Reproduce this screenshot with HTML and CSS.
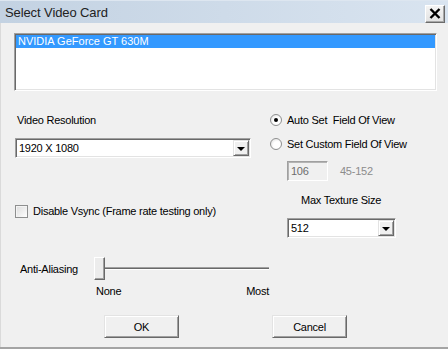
FILE: index.html
```html
<!DOCTYPE html>
<html>
<head>
    <title>Select Video Card</title>
    <link rel="stylesheet" href="styles.css">
</head>
<body>
    <div class="window">
        <div class="titlebar">
            <span class="title">Select Video Card</span>
            <button class="close">
                <svg width="12" height="11" viewBox="0 0 12 11">
                    <path d="M1.5 1 L10.5 10 M10.5 1 L1.5 10" stroke="#000" stroke-width="2.4" fill="none"/>
                </svg>
            </button>
        </div>

        <div class="content">
            <div class="listbox">
                <div class="list-item selected">NVIDIA GeForce GT 630M</div>
            </div>

            <div class="middle">
                <div class="col-left">
                    <div class="label">Video Resolution</div>
                    <div class="combo combo-res">
                        <span class="combo-text">1920 X 1080</span>
                        <span class="drop"><span class="arrow"></span></span>
                    </div>
                    <div class="check-row">
                        <span class="checkbox"></span>
                        <span>Disable Vsync (Frame rate testing only)</span>
                    </div>
                </div>

                <div class="col-right">
                    <div class="radio-row">
                        <span class="radio checked"></span>
                        <span>Auto Set &nbsp;Field Of View</span>
                    </div>
                    <div class="radio-row second">
                        <span class="radio"></span>
                        <span>Set Custom Field Of View</span>
                    </div>
                    <div class="fov-row">
                        <div class="edit disabled">106</div>
                        <span class="range">45-152</span>
                    </div>
                    <div class="label tex-label">Max Texture Size</div>
                    <div class="combo combo-tex">
                        <span class="combo-text">512</span>
                        <span class="drop"><span class="arrow"></span></span>
                    </div>
                </div>
            </div>

            <div class="aa-row">
                <span class="aa-label">Anti-Aliasing</span>
                <div class="slider">
                    <span class="thumb"></span>
                    <span class="track"></span>
                </div>
            </div>
            <div class="slider-labels">
                <span>None</span>
                <span>Most</span>
            </div>

            <div class="buttons">
                <button class="btn">OK</button>
                <button class="btn">Cancel</button>
            </div>
        </div>
    </div>
</body>
</html>
```

FILE: styles.css
```css
body{
    margin: 0;
    padding: 0;
    background-color: #f0f0f0;
    font-family: "Liberation Sans", Arial, sans-serif;
    font-size: 11px;
    letter-spacing: -0.25px;
    color: #000;
}
.window{
    width: 448px;
    height: 349px;
    box-sizing: border-box;
    border-bottom: 2px solid #a4a4a4;
    box-shadow: inset 1px 0 #dadada;
    background-color: #f0f0f0;
    overflow: hidden;
}
.titlebar{
    height: 23px;
    display: flex;
    align-items: center;
    justify-content: space-between;
    padding: 0 3px 0 5px;
    background: linear-gradient(to right, #c3d2e2, #d9e4f0);
    border-top: 1px solid #dde6f0;
    box-sizing: border-box;
}
.title{
    font-size: 13px;
    color: #222;
    letter-spacing: -0.1px;
}
.close{
    width: 20px;
    height: 18px;
    margin-top: 3px;
    padding: 0;
    display: flex;
    align-items: center;
    justify-content: center;
    background: linear-gradient(#f4f4f4, #e2e2e2);
    border: 1px solid;
    border-color: #fff #6b6b6b #6b6b6b #fff;
    box-shadow: inset -1px -1px #a8a8a8;
}
.content{
    padding: 10px 0 0 15px;
}
.listbox{
    width: 423px;
    height: 58px;
    margin-left: -1px;
    box-sizing: border-box;
    padding-top: 1px;
    background-color: #fff;
    border: 1px solid;
    border-color: #a0a0a0 #fff #fff #a0a0a0;
    box-shadow: inset 1px 1px #696969, inset -1px -1px #e3e3e3;
}
.list-item{
    height: 13px;
    line-height: 13px;
    padding-left: 2px;
    margin: 0 1px;
    letter-spacing: 0;
}
.selected{
    background-color: #3399ff;
    color: #fff;
}
.middle{
    display: grid;
    grid-template-columns: 235px 1fr;
    column-gap: 20px;
}
.label{
    height: 20px;
    line-height: 20px;
    margin-top: 19px;
    padding-left: 2px;
}
.combo{
    height: 20px;
    box-sizing: border-box;
    display: flex;
    align-items: center;
    justify-content: space-between;
    background-color: #fff;
    border: 1px solid;
    border-color: #a0a0a0 #fff #fff #a0a0a0;
    box-shadow: inset 1px 1px #696969, inset -1px -1px #e3e3e3;
}
.combo-res{
    margin-top: 8px;
    width: 236px;
}
.combo-text{
    padding-left: 3px;
}
.drop{
    width: 16px;
    height: 16px;
    margin-right: 1px;
    box-sizing: border-box;
    display: flex;
    align-items: center;
    justify-content: center;
    background-color: #f0f0f0;
    border: 1px solid;
    border-color: #e3e3e3 #696969 #696969 #e3e3e3;
    box-shadow: inset 1px 1px #fff, inset -1px -1px #a0a0a0;
}
.arrow{
    width: 0;
    height: 0;
    border-left: 4px solid transparent;
    border-right: 4px solid transparent;
    border-top: 4px solid #000;
    margin-top: 1px;
}
.check-row{
    margin-top: 46px;
    height: 14px;
    display: flex;
    align-items: center;
}
.checkbox{
    width: 13px;
    height: 13px;
    box-sizing: border-box;
    margin-right: 5px;
    border: 1px solid #8e8f8f;
    background: linear-gradient(135deg, #dcdcdc, #fff);
    box-shadow: inset 1px 1px #f4f4f4;
}
.radio-row{
    margin-top: 19px;
    height: 20px;
    display: flex;
    align-items: center;
}
.radio-row.second{
    margin-top: 4px;
}
.radio{
    width: 12px;
    height: 12px;
    box-sizing: border-box;
    margin-right: 5px;
    border-radius: 50%;
    border: 1px solid #8e8f8f;
    background: radial-gradient(circle at 60% 60%, #fff 40%, #d8d8d8);
    display: flex;
    align-items: center;
    justify-content: center;
}
.radio.checked::after{
    content: "";
    width: 4px;
    height: 4px;
    border-radius: 50%;
    background-color: #000;
}
.fov-row{
    margin-top: 7px;
    padding-left: 17px;
    display: flex;
    align-items: center;
    height: 20px;
}
.edit{
    width: 41px;
    height: 20px;
    box-sizing: border-box;
    line-height: 18px;
    padding-left: 3px;
    border: 1px solid;
    border-color: #a0a0a0 #fff #fff #a0a0a0;
    box-shadow: inset 1px 1px #b4b4b4;
}
.edit.disabled{
    background-color: #f0f0f0;
    color: #6d6d6d;
}
.range{
    margin-left: 12px;
    color: #8c8c8c;
}
.tex-label{
    margin-top: 9px;
    padding-left: 31px;
}
.combo-tex{
    margin-top: 8px;
    margin-left: 17px;
    width: 109px;
}
.aa-row{
    margin-top: 19px;
    height: 23px;
    display: flex;
    align-items: center;
}
.aa-label{
    width: 79px;
    padding-left: 5px;
    box-sizing: border-box;
}
.slider{
    width: 175px;
    height: 23px;
    display: flex;
    align-items: center;
}
.thumb{
    width: 11px;
    height: 23px;
    box-sizing: border-box;
    background-color: #ececec;
    border: 1px solid;
    border-color: #fff #696969 #696969 #fff;
    box-shadow: inset -1px -1px #a0a0a0;
}
.track{
    flex: 1;
    height: 3px;
    box-sizing: border-box;
    border-top: 1px solid #a0a0a0;
    border-bottom: 1px solid #fff;
    background-color: #696969;
}
.slider-labels{
    margin-top: 4px;
    margin-left: 81px;
    width: 173px;
    height: 14px;
    line-height: 14px;
    display: flex;
    justify-content: space-between;
}
.buttons{
    margin-top: 17px;
    padding-left: 89px;
    display: flex;
    gap: 93px;
}
.btn{
    width: 75px;
    height: 23px;
    padding: 0;
    font-family: "Liberation Sans", Arial, sans-serif;
    font-size: 11px;
    letter-spacing: -0.25px;
    color: #000;
    background-color: #f0f0f0;
    border: 1px solid;
    border-color: #e3e3e3 #696969 #696969 #e3e3e3;
    box-shadow: inset 1px 1px #fff, inset -1px -1px #a0a0a0;
}
```
